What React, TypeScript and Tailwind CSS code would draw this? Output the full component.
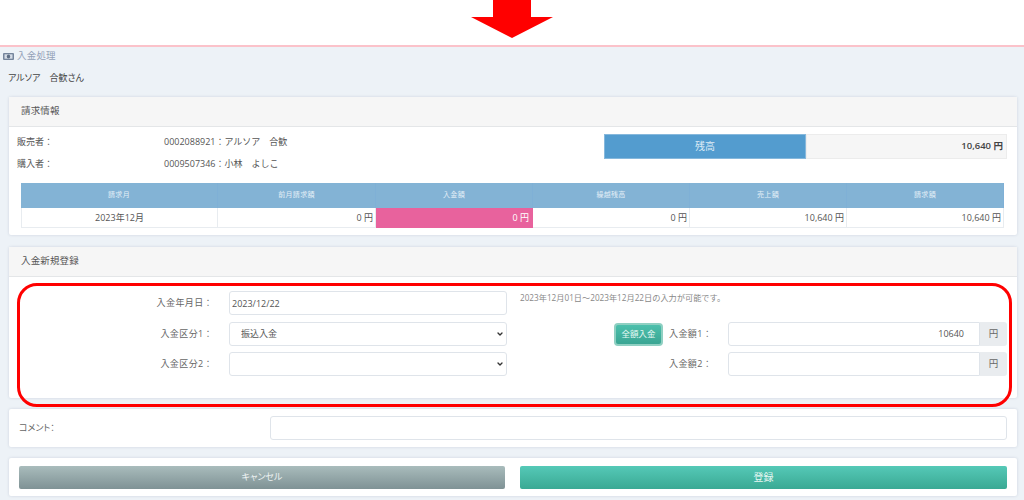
import { ChevronDown } from "lucide-react";

const columns = [
  { head: "請求月", value: "2023年12月", width: "w-[197px]" },
  { head: "前月請求額", value: "0 円", width: "w-[158px]" },
  { head: "入金額", value: "0 円", width: "w-[157px]", pink: true },
  { head: "繰越残高", value: "0 円", width: "w-[157px]" },
  { head: "売上額", value: "10,640 円", width: "w-[157px]" },
  { head: "請求額", value: "10,640 円", width: "w-[157px]" },
];

const cardClass = "mx-[9px] w-[1008px] rounded-[2px] bg-white shadow-[0_0_3px_rgba(60,80,110,0.18)]";
const headerClass = "flex h-[30px] items-center border-b border-[#e4e6e8] bg-[#f6f6f6] pl-[12px] text-[9.5px] tracking-[0.15px] text-[#555]";
const fieldClass = "h-[24px] rounded-[3px] border border-[#dfe4ea] bg-white text-[9px] text-[#555] outline-none";
const labelClass = "w-[204px] text-right text-[9px] tracking-[0.4px] text-[#666]";

function Amount({ label, value, className }: { label: string; value?: string; className?: string }) {
  return (
    <div className={`flex items-center ${className ?? ""}`}>
      <span className="w-[59px] text-[9px] tracking-[0.4px] whitespace-nowrap text-[#666]">{label}</span>
      <div className="flex h-[24px] w-[279px]">
        <div className="flex w-[252px] items-center justify-end rounded-l-[3px] border border-[#dfe4ea] bg-white pr-[15px] text-[9px] text-[#555]">
          {value}
        </div>
        <div className="flex w-[27px] items-center justify-center rounded-r-[3px] bg-[#e9ecef] text-[9.5px] text-[#666]">円</div>
      </div>
    </div>
  );
}

function Select({ value }: { value?: string }) {
  return (
    <div className="relative ml-[16px] w-[278px]">
      <select className={`${fieldClass} block w-full appearance-none pl-[11px] text-[9.5px]`}>
        <option>{value}</option>
      </select>
      <ChevronDown size={8} strokeWidth={4} className="absolute top-[8px] right-[3px] text-[#333]" />
    </div>
  );
}

export default function App() {
  return (
    <div className="relative h-[500px] w-[1024px] overflow-hidden bg-[#edf2f7] font-['Open_Sans','Noto_Sans_CJK_JP',sans-serif]">
      {/* top strip with arrow */}
      <div className="h-[47px] border-b-2 border-[#fbc2ca] bg-white">
        <svg width="1024" height="45" viewBox="0 0 1024 45" className="block">
          <path d="M493 0H531V17H553L512 38L471 17H493Z" fill="#ff0000" />
        </svg>
      </div>

      <div className="flex h-[18px] items-center pl-[3px] text-[9.5px] tracking-[0.2px] text-[#93a1b8]">
        <svg width="11" height="7" viewBox="0 0 11 7" className="mr-[3px]">
          <rect width="11" height="7" rx="1" fill="#76859c" />
          <rect x="1.5" y="1.3" width="8" height="4.4" fill="#d5dce6" />
          <ellipse cx="5.5" cy="3.5" rx="1.7" ry="2" fill="#5f6e85" />
        </svg>
        入金処理
      </div>
      <div className="mt-[4px] h-[17px] pl-[8px] text-[9px] leading-[17px] text-[#444] [font-feature-settings:'palt']">アルソア　合歓さん</div>

      {/* billing info */}
      <section className={`${cardClass} mt-[11px] h-[138px]`}>
        <div className={headerClass}>請求情報</div>
        <div className="flex h-[56px]">
          <div className="w-[595px] pt-[4px] pl-[8px] text-[9px] text-[#555]">
            <div className="flex h-[22px] items-center">
              <span className="w-[147px]">販売者：</span>
              <span>0002088921：アルソア　合歓</span>
            </div>
            <div className="flex h-[22px] items-center">
              <span className="w-[147px]">購入者：</span>
              <span>0009507346：小林　よしこ</span>
            </div>
          </div>
          <div className="mt-[7px] flex h-[25px] w-[403px] text-[10px]">
            <div className="flex w-[202px] items-center justify-center border border-[#86b8dc] bg-[#539ccf] text-[#dcebf6]">残高</div>
            <div className="flex w-[201px] items-center justify-end border border-[#ececec] bg-[#f6f6f6] pr-[3px] text-[9.5px] font-semibold text-[#444]">10,640 円</div>
          </div>
        </div>
        <div className="ml-[12px] flex w-[983px]">
          {columns.map((col) => (
            <div key={col.head} className={col.width}>
              <div className="flex h-[25px] items-center justify-center border-r border-[#7fb0d6] bg-[#83b3d5] text-[7px] tracking-[0.3px] text-[#e4eff7]">
                {col.head}
              </div>
              <div
                className={
                  col.pink
                    ? "flex h-[20px] items-center justify-end bg-[#e8629d] pr-[4px] text-[9px] text-white"
                    : `flex h-[20px] items-center border-r border-b border-[#e8ecf0] text-[9px] text-[#555] ${
                        col.head === "請求月" ? "justify-center border-l" : "justify-end pr-[2px]"
                      }`
                }
              >
                {col.value}
              </div>
            </div>
          ))}
        </div>
      </section>

      {/* new deposit */}
      <section className={`${cardClass} mt-[12px] h-[151px]`}>
        <div className={headerClass}>入金新規登録</div>
        <div className="flex flex-col pt-[14px]">
          <div className="flex h-[24px] items-center">
            <span className={labelClass}>入金年月日：</span>
            <input readOnly value="2023/12/22" className={`${fieldClass} ml-[16px] w-[278px] px-[2px]`} />
            <span className="mb-[10px] ml-[13px] text-[8.2px] whitespace-nowrap text-[#888]">2023年12月01日～2023年12月22日の入力が可能です。</span>
          </div>
          <div className="mt-[7px] flex h-[24px] items-center">
            <span className={labelClass}>入金区分1：</span>
            <Select value="振込入金" />
            <button className="ml-[107px] h-[23px] w-[49px] rounded-[4px] border-2 border-[#8fd0c2] bg-gradient-to-b from-[#4cc0ac] to-[#3aa593] text-[8.5px] text-[#e6f7f3]">
              全額入金
            </button>
            <Amount label="入金額1：" value="10640" className="ml-[6px]" />
          </div>
          <div className="mt-[6px] flex h-[24px] items-center">
            <span className={labelClass}>入金区分2：</span>
            <Select />
            <Amount label="入金額2：" className="ml-[162px]" />
          </div>
        </div>
      </section>

      {/* comment */}
      <section className={`${cardClass} mt-[11px] flex h-[38px] items-center text-[9px]`}>
        <span className="w-[261px] pl-[10px] text-[#666] [font-feature-settings:'palt']">コメント：</span>
        <input readOnly className={`${fieldClass} w-[737px]`} />
      </section>

      {/* actions */}
      <section className={`${cardClass} mt-[11px] flex h-[38px] items-center gap-[15px] pl-[10px] text-[10px]`}>
        <button className="h-[23px] w-[486px] rounded-[2px] bg-gradient-to-b from-[#a9bcbc] to-[#7f9295] text-[9px] text-[#eef3f3] [font-feature-settings:'palt']">キャンセル</button>
        <button className="h-[23px] w-[487px] rounded-[2px] bg-gradient-to-b from-[#55c9b7] to-[#3aa994] text-[#e6f7f3]">登録</button>
      </section>

      {/* red annotation */}
      <div className="pointer-events-none absolute top-[283px] left-[17px] h-[124px] w-[995px] rounded-[20px] border-[3px] border-[#ff0000]" />
    </div>
  );
}
